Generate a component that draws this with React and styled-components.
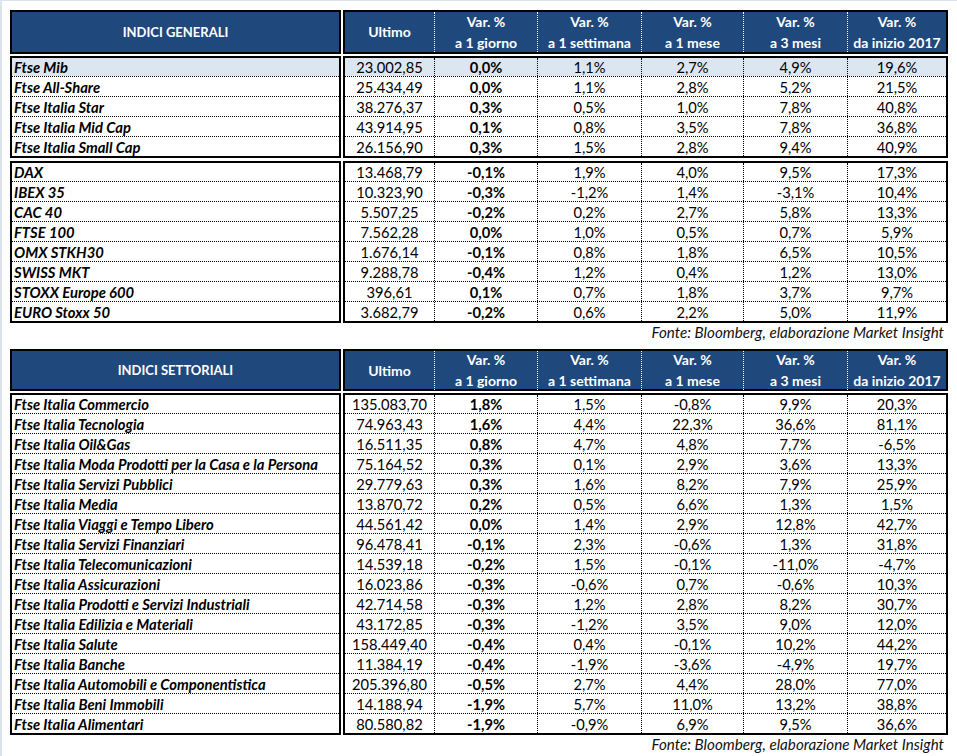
import styled, { createGlobalStyle } from "styled-components";

const GlobalStyle = createGlobalStyle`
  html, body {
    margin: 0;
    padding: 0;
    background: #fff;
  }
  body {
    font-family: Lato, "Open Sans", sans-serif;
    color: #000;
  }
`;

const COLS = "89px 103px 104px 102px 104px 99px";

const Page = styled.div`
  box-sizing: border-box;
  min-height: 756px;
  width: 957px;
  border-top: 1px solid #dce3ee;
  border-left: 2px solid #dce3ee;
  padding: 9px 0 0 8px;
`;

const Section = styled.div`
  display: flex;
  gap: 2px;
  margin-bottom: ${(p) => p.$gap ?? 2}px;
`;

const Box = styled.div`
  box-sizing: border-box;
  border: 2px solid #000;
  width: ${(p) => (p.$wide ? 605 : 331)}px;
  background: #fff;
`;

const HeadBox = styled(Box)`
  background: #1f497d;
  color: #fff;
  font-weight: 700;
  font-size: 14px;
  height: ${(p) => p.$h}px;
`;

const HeadName = styled.div`
  height: 100%;
  display: flex;
  align-items: center;
  justify-content: center;
  font-size: 13px;
`;

const HeadGrid = styled.div`
  display: grid;
  grid-template-columns: ${COLS};
  height: 100%;
`;

const HeadCell = styled.div`
  display: flex;
  flex-direction: column;
  align-items: center;
  justify-content: center;
  gap: 3px;
  line-height: 18px;
  & + & {
    border-left: 1px dotted #fff;
  }
`;

const NameRow = styled.div`
  box-sizing: border-box;
  height: 20px;
  padding-left: 2px;
  display: flex;
  align-items: center;
  font-weight: 700;
  font-style: italic;
  font-size: 14.8px;
  white-space: nowrap;
  background: ${(p) => (p.$hl ? "#dce6f1" : "transparent")};
  border-top: 1px dotted #000;
  &:first-child {
    border-top: none;
    height: 18px;
  }
`;

const DataRow = styled.div`
  box-sizing: border-box;
  display: grid;
  grid-template-columns: ${COLS};
  height: 20px;
  font-size: 14.7px;
  background: ${(p) => (p.$hl ? "#dce6f1" : "transparent")};
  border-top: 1px dotted #000;
  &:first-child {
    border-top: none;
    height: 18px;
  }
`;

const Cell = styled.div`
  display: flex;
  align-items: center;
  justify-content: center;
  font-weight: ${(p) => (p.$bold ? 700 : 400)};
  & + & {
    border-left: 1px dotted #000;
  }
`;

const Note = styled.div`
  width: 938px;
  height: ${(p) => p.$h}px;
  line-height: 18px;
  text-align: right;
  padding-right: 4px;
  box-sizing: border-box;
  font-style: italic;
  font-size: 15.2px;
  color: #111;
`;

const HEADS = [
  ["Var. %", "a 1 giorno"],
  ["Var. %", "a 1 settimana"],
  ["Var. %", "a 1 mese"],
  ["Var. %", "a 3 mesi"],
  ["Var. %", "da inizio 2017"],
];

const GENERALI_A = [
  ["Ftse Mib", "23.002,85", "0,0%", "1,1%", "2,7%", "4,9%", "19,6%", true],
  ["Ftse All-Share", "25.434,49", "0,0%", "1,1%", "2,8%", "5,2%", "21,5%"],
  ["Ftse Italia Star", "38.276,37", "0,3%", "0,5%", "1,0%", "7,8%", "40,8%"],
  ["Ftse Italia Mid Cap", "43.914,95", "0,1%", "0,8%", "3,5%", "7,8%", "36,8%"],
  ["Ftse Italia Small Cap", "26.156,90", "0,3%", "1,5%", "2,8%", "9,4%", "40,9%"],
];

const GENERALI_B = [
  ["DAX", "13.468,79", "-0,1%", "1,9%", "4,0%", "9,5%", "17,3%"],
  ["IBEX 35", "10.323,90", "-0,3%", "-1,2%", "1,4%", "-3,1%", "10,4%"],
  ["CAC 40", "5.507,25", "-0,2%", "0,2%", "2,7%", "5,8%", "13,3%"],
  ["FTSE 100", "7.562,28", "0,0%", "1,0%", "0,5%", "0,7%", "5,9%"],
  ["OMX STKH30", "1.676,14", "-0,1%", "0,8%", "1,8%", "6,5%", "10,5%"],
  ["SWISS MKT", "9.288,78", "-0,4%", "1,2%", "0,4%", "1,2%", "13,0%"],
  ["STOXX Europe 600", "396,61", "0,1%", "0,7%", "1,8%", "3,7%", "9,7%"],
  ["EURO Stoxx 50", "3.682,79", "-0,2%", "0,6%", "2,2%", "5,0%", "11,9%"],
];

const SETTORIALI = [
  ["Ftse Italia Commercio", "135.083,70", "1,8%", "1,5%", "-0,8%", "9,9%", "20,3%"],
  ["Ftse Italia Tecnologia", "74.963,43", "1,6%", "4,4%", "22,3%", "36,6%", "81,1%"],
  ["Ftse Italia Oil&Gas", "16.511,35", "0,8%", "4,7%", "4,8%", "7,7%", "-6,5%"],
  ["Ftse Italia Moda Prodotti per la Casa e la Persona", "75.164,52", "0,3%", "0,1%", "2,9%", "3,6%", "13,3%"],
  ["Ftse Italia Servizi Pubblici", "29.779,63", "0,3%", "1,6%", "8,2%", "7,9%", "25,9%"],
  ["Ftse Italia Media", "13.870,72", "0,2%", "0,5%", "6,6%", "1,3%", "1,5%"],
  ["Ftse Italia Viaggi e Tempo Libero", "44.561,42", "0,0%", "1,4%", "2,9%", "12,8%", "42,7%"],
  ["Ftse Italia Servizi Finanziari", "96.478,41", "-0,1%", "2,3%", "-0,6%", "1,3%", "31,8%"],
  ["Ftse Italia Telecomunicazioni", "14.539,18", "-0,2%", "1,5%", "-0,1%", "-11,0%", "-4,7%"],
  ["Ftse Italia Assicurazioni", "16.023,86", "-0,3%", "-0,6%", "0,7%", "-0,6%", "10,3%"],
  ["Ftse Italia Prodotti e Servizi Industriali", "42.714,58", "-0,3%", "1,2%", "2,8%", "8,2%", "30,7%"],
  ["Ftse Italia Edilizia e Materiali", "43.172,85", "-0,3%", "-1,2%", "3,5%", "9,0%", "12,0%"],
  ["Ftse Italia Salute", "158.449,40", "-0,4%", "0,4%", "-0,1%", "10,2%", "44,2%"],
  ["Ftse Italia Banche", "11.384,19", "-0,4%", "-1,9%", "-3,6%", "-4,9%", "19,7%"],
  ["Ftse Italia Automobili e Componentistica", "205.396,80", "-0,5%", "2,7%", "4,4%", "28,0%", "77,0%"],
  ["Ftse Italia Beni Immobili", "14.188,94", "-1,9%", "5,7%", "11,0%", "13,2%", "38,8%"],
  ["Ftse Italia Alimentari", "80.580,82", "-1,9%", "-0,9%", "6,9%", "9,5%", "36,6%"],
];

function Header({ title, h }) {
  return (
    <Section>
      <HeadBox $h={h}>
        <HeadName>{title}</HeadName>
      </HeadBox>
      <HeadBox $wide $h={h}>
        <HeadGrid>
          <HeadCell>Ultimo</HeadCell>
          {HEADS.map(([a, b]) => (
            <HeadCell key={b}>
              <span>{a}</span>
              <span>{b}</span>
            </HeadCell>
          ))}
        </HeadGrid>
      </HeadBox>
    </Section>
  );
}

function Group({ rows, gap }) {
  return (
    <Section $gap={gap}>
      <Box>
        {rows.map((r) => (
          <NameRow key={r[0]} $hl={r[7]}>
            {r[0]}
          </NameRow>
        ))}
      </Box>
      <Box $wide>
        {rows.map((r) => (
          <DataRow key={r[0]} $hl={r[7]}>
            {r.slice(1, 7).map((v, i) => (
              <Cell key={i} $bold={i === 1}>
                {v}
              </Cell>
            ))}
          </DataRow>
        ))}
      </Box>
    </Section>
  );
}

export default function App() {
  return (
    <>
      <GlobalStyle />
      <Page>
        <Header title="INDICI GENERALI" h={44} />
        <Group rows={GENERALI_A} gap={3} />
        <Group rows={GENERALI_B} gap={0} />
        <Note $h={26}>Fonte: Bloomberg, elaborazione Market Insight</Note>
        <Header title="INDICI SETTORIALI" h={42} />
        <Group rows={SETTORIALI} gap={0} />
        <Note $h={22}>Fonte: Bloomberg, elaborazione Market Insight</Note>
      </Page>
    </>
  );
}
